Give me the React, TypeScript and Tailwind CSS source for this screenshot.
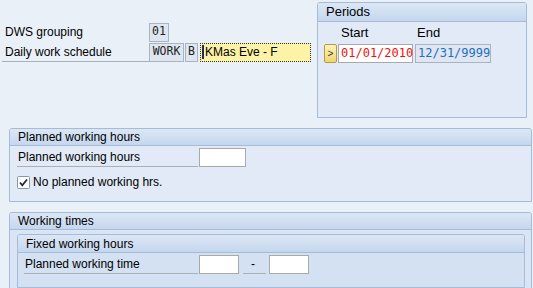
import React from "react";

const sans = { fontFamily: '"Liberation Sans", Arial, sans-serif' };
const mono = { fontFamily: '"DejaVu Sans Mono", "Liberation Mono", monospace' };

function Header({ children, inner }: { children: React.ReactNode; inner?: boolean }) {
  return (
    <div
      className={
        "flex items-center border-b border-[#a5bbd8] bg-gradient-to-b from-[#dce7f5] to-[#c5d7ee] text-[12px] text-black " +
        (inner ? "h-[18px] pl-[8px]" : "h-[17px] pl-[8px]")
      }
    >
      {children}
    </div>
  );
}

function Check() {
  return (
    <svg width="13" height="13" viewBox="0 0 13 13">
      <rect x="0.5" y="0.5" width="12" height="12" rx="1" fill="#fff" stroke="#8a96a6" />
      <path d="M3 6.5 L5.3 9.3 L10 3.5" fill="none" stroke="#1c2a44" strokeWidth="1.8" />
    </svg>
  );
}

export default function App() {
  return (
    <div className="w-[533px] h-[288px] overflow-hidden bg-[#eaf0f8] text-[12px] text-black" style={sans}>
      {/* Top area */}
      <div className="flex h-[120px]">
        <div className="w-[317px] pt-[22px] pl-[2px]">
          <div className="flex h-[20px] items-center">
            <div className="w-[147px] pl-[3px]">DWS grouping</div>
            <div
              className="flex h-[19px] w-[20px] items-center justify-center border border-[#a9b4c2] bg-[#dfe6ef] text-[11.5px] text-[#222]"
              style={mono}
            >
              01
            </div>
          </div>
          <div className="flex h-[20px] items-center">
            <div className="flex h-[20px] w-[147px] items-center border-b border-[#a8b0ba] pl-[3px]">Daily work schedule</div>
            <div
              className="flex h-[19px] w-[35px] items-center justify-center border border-[#a9b4c2] bg-[#dfe6ef] text-[11.5px] text-[#222]"
              style={mono}
            >
              WORK
            </div>
            <div
              className="ml-[1px] flex h-[19px] w-[13px] items-center justify-center border border-[#a9b4c2] bg-[#dfe6ef] text-[11.5px] text-[#222]"
              style={mono}
            >
              B
            </div>
            <div className="ml-[2px] flex h-[19px] w-[111px] items-center border border-dotted border-[#333] bg-[#fdf3a6] pl-[1px]">
              <span className="mr-[1px] h-[14px] w-[2px] bg-[#1a2a6a]" />
              <span>KMas Eve - F</span>
            </div>
          </div>
        </div>

        {/* Periods panel */}
        <div className="mt-[2px] h-[116px] w-[210px] overflow-hidden rounded-t-[3px] border border-[#a5bbd8] bg-[#e1eaf6]">
          <div className="flex h-[19px] items-center border-b border-[#a5bbd8] bg-gradient-to-b from-[#dce7f5] to-[#c5d7ee] pl-[8px] text-[13px]">
            Periods
          </div>
          <div className="flex h-[21px] items-center text-[13px]">
            <div className="w-[99px] pl-[23px]">Start</div>
            <div>End</div>
          </div>
          <div className="flex h-[20px] items-center pl-[6px]">
            <div className="flex h-[19px] w-[13px] items-center justify-center rounded-[2px] border border-[#b39b48] bg-gradient-to-b from-[#fff3b8] to-[#f0d66e] text-[10px] text-[#333]">
              &gt;
            </div>
            <div
              className="ml-[1px] flex h-[19px] w-[75px] items-center border border-[#a9a9a9] bg-white pl-[2px] text-[12px] text-[#ee1111]"
              style={mono}
            >
              01/01/2010
            </div>
            <div
              className="ml-[2px] flex h-[19px] w-[76px] items-center border border-[#a9b4c2] bg-[#dfe6ef] pl-[2px] text-[12px] text-[#1c6ec6]"
              style={mono}
            >
              12/31/9999
            </div>
          </div>
        </div>
      </div>

      {/* Planned working hours */}
      <div className="ml-[9px] mt-[8px] h-[74px] w-[523px] overflow-hidden rounded-t-[3px] border border-[#a5bbd8] bg-[#e1eaf6]">
        <Header>Planned working hours</Header>
        <div className="flex h-[21px] items-center pl-[7px] pt-[2px]">
          <div className="flex h-[19px] w-[181px] items-center border-b border-[#a8b0ba] pl-[1px]">Planned working hours</div>
          <div className="ml-[1px] h-[19px] w-[47px] border border-[#a9a9a9] bg-white" />
        </div>
        <div className="mt-[6px] flex items-center gap-[3px] pl-[7px]">
          <Check />
          <span>No planned working hrs.</span>
        </div>
      </div>

      {/* Working times */}
      <div className="ml-[9px] mt-[10px] h-[90px] w-[523px] overflow-hidden rounded-t-[3px] border border-[#a5bbd8] bg-[#d9e5f4]">
        <Header>Working times</Header>
        <div className="ml-[7px] mt-[4px] h-[54px] w-[508px] overflow-hidden rounded-t-[3px] border border-[#a5bbd8] bg-[#d3e1f3]">
          <Header inner>Fixed working hours</Header>
          <div className="flex h-[20px] items-center pl-[6px] pt-[2px]">
            <div className="flex h-[19px] w-[174px] items-center border-b border-[#a8b0ba] pl-[1px]">Planned working time</div>
            <div className="ml-[1px] h-[19px] w-[40px] border border-[#a9a9a9] bg-white" />
            <div className="ml-[4px] flex h-[19px] w-[23px] items-center border-b border-[#a8b0ba] pl-[8px]">-</div>
            <div className="ml-[3px] h-[19px] w-[40px] border border-[#a9a9a9] bg-white" />
          </div>
        </div>
      </div>
    </div>
  );
}
